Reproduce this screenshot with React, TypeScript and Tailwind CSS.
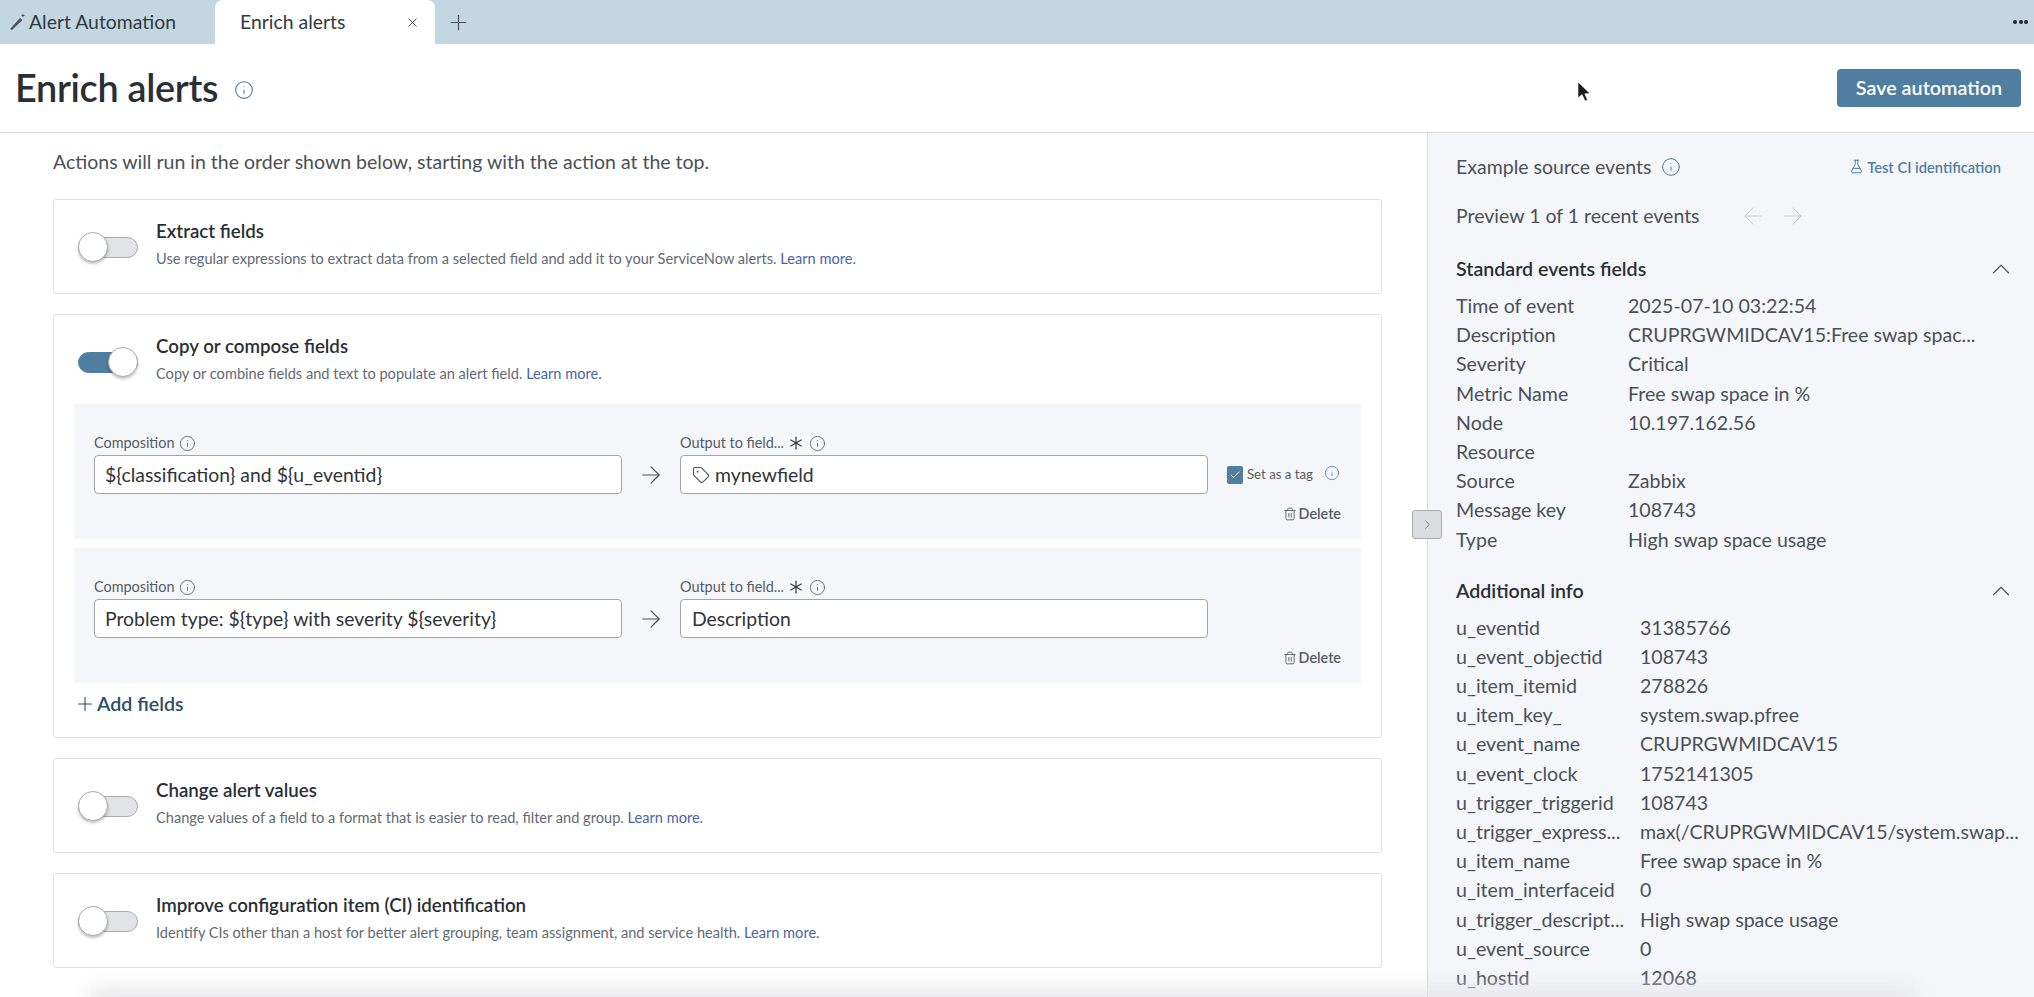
import { ArrowRight, ArrowLeft, ChevronRight, ChevronUp, FlaskConical, Info, Plus, Tag, Trash2, X, Check, Asterisk } from "lucide-react";

const standardFields = [
  ["Time of event", "2025-07-10 03:22:54"],
  ["Description", "CRUPRGWMIDCAV15:Free swap spac..."],
  ["Severity", "Critical"],
  ["Metric Name", "Free swap space in %"],
  ["Node", "10.197.162.56"],
  ["Resource", ""],
  ["Source", "Zabbix"],
  ["Message key", "108743"],
  ["Type", "High swap space usage"],
];

const additionalInfo = [
  ["u_eventid", "31385766"],
  ["u_event_objectid", "108743"],
  ["u_item_itemid", "278826"],
  ["u_item_key_", "system.swap.pfree"],
  ["u_event_name", "CRUPRGWMIDCAV15"],
  ["u_event_clock", "1752141305"],
  ["u_trigger_triggerid", "108743"],
  ["u_trigger_express...", "max(/CRUPRGWMIDCAV15/system.swap..."],
  ["u_item_name", "Free swap space in %"],
  ["u_item_interfaceid", "0"],
  ["u_trigger_descript...", "High swap space usage"],
  ["u_event_source", "0"],
  ["u_hostid", "12068"],
];

const Toggle = ({ on = false }: { on?: boolean }) => (
  <div className="relative w-[60px] h-[32px] mt-[2px] shrink-0 flex items-center">
    <div
      className={`w-full h-[21px] rounded-full border ${
        on ? "bg-[#4f7ea0] border-[#4f7ea0]" : "bg-[#e2e3e6] border-[#a9abb0]"
      }`}
    />
    <div
      className={`absolute top-0 w-[30px] h-[30px] rounded-full bg-white border border-[#a9abb0] shadow-[0_2px_3px_rgba(0,0,0,0.25)] ${
        on ? "right-0" : "left-0"
      }`}
    />
  </div>
);

const ActionHeader = ({
  on,
  title,
  text,
}: {
  on?: boolean;
  title: string;
  text: string;
}) => (
  <div className="flex items-center gap-[18px]">
    <Toggle on={on} />
    <div className="-mt-[5px]">
      <h3 className="text-[18.7px] leading-[26px] mb-[4px] font-semibold text-[#2a2f36]">{title}</h3>
      <p className="text-[14.6px] leading-[22px] text-[#626a73]">
        {text} <a className="text-[#4a64a8]">Learn more.</a>
      </p>
    </div>
  </div>
);

const ActionCard = ({
  on,
  title,
  text,
}: {
  on?: boolean;
  title: string;
  text: string;
}) => (
  <div className="h-[95px] border border-[#dfe0e3] rounded-[3px] bg-white pl-[24px] flex items-center">
    <ActionHeader on={on} title={title} text={text} />
  </div>
);

const FieldLabel = ({ children, required }: { children: string; required?: boolean }) => (
  <div className="flex items-center h-[18px] mb-[3px] text-[14.4px] text-[#555c65]">
    {children}
    {required && <Asterisk size={24} strokeWidth={1.2} className="text-[#33383f]" />}
    <Info size={17} strokeWidth={1.2} className={`${required ? "ml-[1px]" : "ml-[5px]"} text-[#555c65]`} />
  </div>
);

const FieldRow = ({
  composition,
  output,
  tag,
}: {
  composition: string;
  output: string;
  tag?: boolean;
}) => (
  <div className="bg-[#f5f6fa] h-[135px] pt-[30px] pl-[20px] pr-[20px] flex flex-col">
    <div className="flex">
      <div className="w-[528px]">
        <FieldLabel>Composition</FieldLabel>
        <div className="h-[39px] border border-[#a3a5a9] rounded-[4px] bg-white px-[10px] flex items-center text-[19.4px] text-[#2f343b]">
          {composition}
        </div>
      </div>
      <div className="w-[58px] pt-[21px] flex justify-center items-center">
        <ArrowRight size={28} strokeWidth={1} className="text-[#4a5058]" />
      </div>
      <div className="w-[528px]">
        <FieldLabel required>Output to field...</FieldLabel>
        <div className="h-[39px] border border-[#a3a5a9] rounded-[4px] bg-white px-[11px] flex items-center text-[19.4px] text-[#2f343b]">
          {tag && <Tag size={18} strokeWidth={1.4} className="mr-[5px] text-[#4a5058]" />}
          {output}
        </div>
      </div>
      {tag && (
        <div className="pt-[21px] ml-[19px] flex items-center text-[13.2px] text-[#555c65]">
          <span className="w-[16px] h-[18px] rounded-[2px] bg-[#4f7ea0] flex items-center justify-center mr-[4px]">
            <Check size={12} strokeWidth={2} className="text-white" />
          </span>
          Set as a tag
          <Info size={16} strokeWidth={1.2} className="ml-[11px] -mt-[3px] text-[#4f7ea0]" />
        </div>
      )}
    </div>
    <div className="mt-auto mb-[14px] flex justify-end items-center text-[14.4px] font-semibold text-[#555c65]">
      <Trash2 size={14} strokeWidth={1.5} className="mr-[2px]" />
      Delete
    </div>
  </div>
);

const SectionHead = ({ title }: { title: string }) => (
  <div className="flex items-center justify-between pr-[18px] h-[28px]">
    <h4 className="text-[19.6px] font-semibold text-[#2a2f36]">{title}</h4>
    <ChevronUp size={30} strokeWidth={1} className="text-[#555c65]" />
  </div>
);

const DataRows = ({ rows, cols }: { rows: string[][]; cols: string }) => (
  <div className="mt-[8px]">
    {rows.map(([k, v]) => (
      <div key={k} className={`grid ${cols} h-[29.2px] items-center text-[19.6px] text-[#4a5058] whitespace-nowrap`}>
        <span>{k}</span>
        <span>{v}</span>
      </div>
    ))}
  </div>
);

const App = () => {
  return (
    <div
      className="relative w-[2034px] h-[997px] overflow-hidden bg-white flex flex-col"
      style={{ fontFamily: "Lato, 'Open Sans', sans-serif" }}
    >
      {/* Tab strip */}
      <div className="h-[44px] shrink-0 bg-[#c3d7e2] flex items-center text-[19.4px] text-[#33383f]">
        <div className="w-[215px] flex items-center pl-[8px]">
          <svg width="19" height="19" viewBox="0 0 19 19" className="mr-[2px]">
            <path d="M2 17 L12 6 L14.5 8 L4 18 Z" fill="#4f555c" />
            <path d="M15 2v3M13.5 3.5h3" stroke="#4f555c" strokeWidth="1" />
          </svg>
          Alert Automation
        </div>
        <div className="w-[220px] h-[44px] bg-white rounded-t-[8px] flex items-center justify-between pl-[25px] pr-[15px]">
          Enrich alerts
          <X size={15} strokeWidth={1.4} />
        </div>
        <Plus size={25} strokeWidth={1.1} className="ml-[11px] text-[#4a5058]" />
        <div className="ml-auto mr-[6px] flex gap-[1.5px]">
          <span className="w-[4px] h-[4px] rounded-full bg-[#22262b]" />
          <span className="w-[4px] h-[4px] rounded-full bg-[#22262b]" />
          <span className="w-[4px] h-[4px] rounded-full bg-[#22262b]" />
        </div>
      </div>

      {/* Page header */}
      <div className="h-[89px] shrink-0 border-b border-[#d9dadd] flex items-center pl-[15px] pr-[13px]">
        <h1 className="text-[37.8px] font-semibold text-[#2a2f36] leading-none tracking-[-0.3px]">Enrich alerts</h1>
        <Info size={20} strokeWidth={1.3} className="ml-[16px] mt-[3px] text-[#4f7ea0]" />
        <button className="ml-auto w-[184px] h-[38px] rounded-[4px] bg-[#4f7ea0] text-white text-[19.8px] font-semibold">
          Save automation
        </button>
      </div>

      <div className="flex flex-1 min-h-0">
        {/* Actions column */}
        <div className="w-[1427px] shrink-0 pl-[53px] pr-[45px] pt-[18px]">
          <p className="text-[19.5px] leading-[22px] text-[#4a5058]">
            Actions will run in the order shown below, starting with the action at the top.
          </p>
          <div className="mt-[26px] flex flex-col gap-[20px]">
            <ActionCard
              title="Extract fields"
              text="Use regular expressions to extract data from a selected field and add it to your ServiceNow alerts."
            />
            <div className="h-[424px] border border-[#dfe0e3] rounded-[3px] bg-white">
              <div className="pl-[24px] pt-[23px]">
                <ActionHeader
                  on
                  title="Copy or compose fields"
                  text="Copy or combine fields and text to populate an alert field."
                />
              </div>
              <div className="mx-[20px] mt-[19px] flex flex-col gap-[9px]">
                <FieldRow composition="${classification} and ${u_eventid}" output="mynewfield" tag />
                <FieldRow composition="Problem type: ${type} with severity ${severity}" output="Description" />
              </div>
              <div className="ml-[20px] mt-[6px] flex items-center text-[19.6px] font-semibold text-[#2c4d68]">
                <Plus size={22} strokeWidth={1.2} className="mr-[1px]" />
                Add fields
              </div>
            </div>
            <ActionCard
              title="Change alert values"
              text="Change values of a field to a format that is easier to read, filter and group."
            />
            <ActionCard
              title="Improve configuration item (CI) identification"
              text="Identify CIs other than a host for better alert grouping, team assignment, and service health."
            />
          </div>
        </div>

        {/* Example events panel */}
        <div className="relative flex-1 min-w-0 bg-[#f5f6fa] border-l border-[#d9dadd] pl-[28px] pt-[20px]">
          <button className="absolute -left-[16px] top-[377px] w-[30px] h-[29px] rounded-[3px] bg-[#dcdde0] border border-[#a9abb0] flex items-center justify-center">
            <ChevronRight size={15} strokeWidth={1.4} className="text-[#4f7ea0]" />
          </button>
          <div className="flex items-center h-[28px] text-[19.5px] text-[#4a5058]">
            Example source events
            <Info size={20} strokeWidth={1.2} className="ml-[10px] text-[#4f7ea0]" />
            <span className="ml-auto mr-[33px] flex items-center text-[14.7px] font-semibold text-[#4f7ea0]">
              <FlaskConical size={15} strokeWidth={1.6} className="mr-[3px]" />
              Test CI identification
            </span>
          </div>
          <div className="flex items-center h-[28px] mt-[21px] text-[19.5px] text-[#4a5058]">
            Preview 1 of 1 recent events
            <ArrowLeft size={28} strokeWidth={0.8} className="ml-[39px] text-[#c4c6ca]" />
            <ArrowRight size={28} strokeWidth={0.8} className="ml-[12px] text-[#c4c6ca]" />
          </div>
          <div className="mt-[25px]">
            <SectionHead title="Standard events fields" />
            <DataRows rows={standardFields} cols="grid-cols-[172px_1fr]" />
          </div>
          <div className="mt-[23px]">
            <SectionHead title="Additional info" />
            <DataRows rows={additionalInfo} cols="grid-cols-[184px_1fr]" />
          </div>
        </div>
      </div>

      {/* Mouse pointer in the capture */}
      <svg width="16" height="24" viewBox="0 0 16 24" className="absolute left-[1577px] top-[81px]">
        <path d="M1 1 L1 17 L5 13.5 L8 20 L10.5 19 L7.8 12.8 L13 12.5 Z" fill="#1c1c1e" stroke="#fff" strokeWidth="0.6" />
      </svg>

      {/* Bottom fade of the video frame */}
      <div className="absolute left-[90px] right-[120px] -bottom-[12px] h-[20px] bg-[#e4e4e6] blur-[10px]" />
    </div>
  );
};

export default App;
